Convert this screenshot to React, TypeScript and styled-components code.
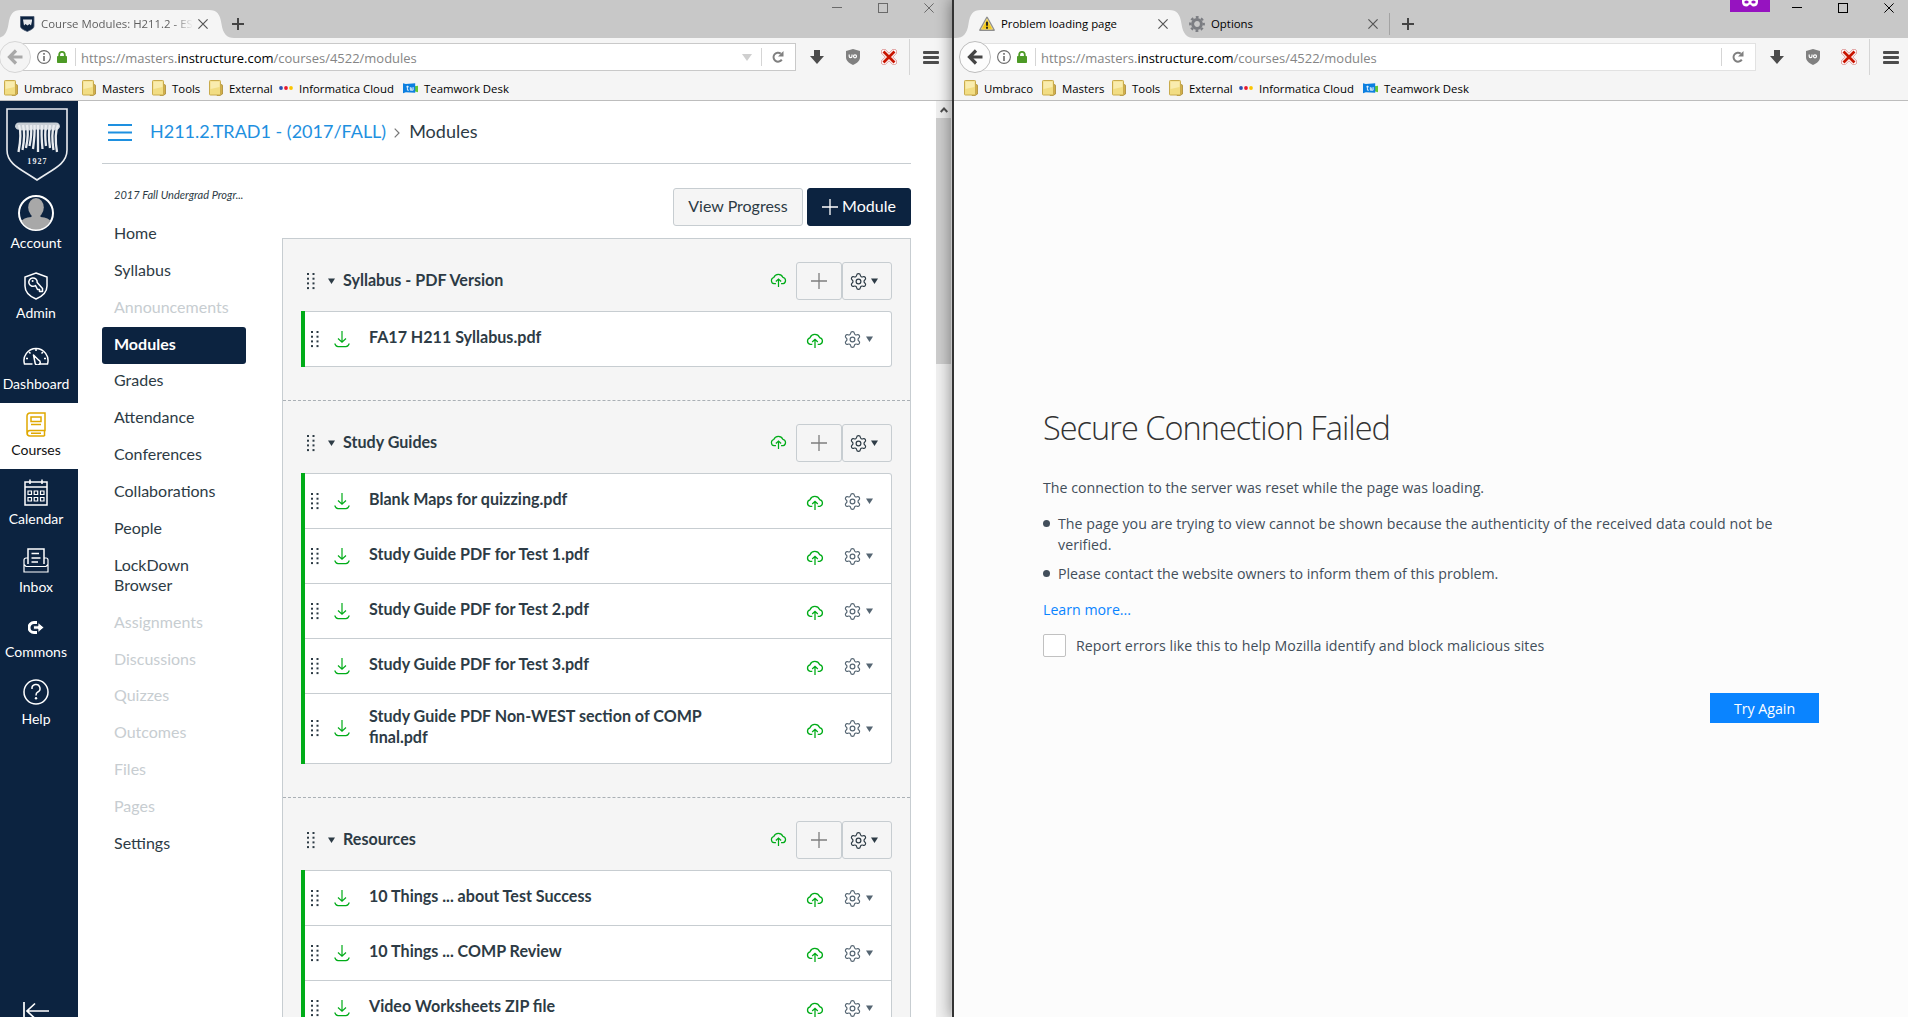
import React from 'react';
import styled, { createGlobalStyle } from 'styled-components';
import { Settings } from 'lucide-react';

const UI = '"Open Sans", "Noto Sans", sans-serif';
const LATO = 'Lato, "Open Sans", sans-serif';
const NAVY = '#0c2340';
const GREEN = '#00ac18';
const INK = '#2d3b45';
const LINE = '#c7cdd1';

const Global = createGlobalStyle`
  * { box-sizing: border-box; }
  html, body { margin: 0; height: 1017px; overflow: hidden; background: #fff; }
  button { font: inherit; color: inherit; margin: 0; padding: 0; }
  svg { display: block; flex: none; }
`;

/* ---------- window frame ---------- */

const Desktop = styled.div`
  display: flex;
  width: 1908px;
  height: 1017px;
  overflow: hidden;
`;

const Window = styled.section<{ $width: number; $front?: boolean }>`
  position: relative;
  display: flex;
  flex-direction: column;
  flex: none;
  width: ${p => p.$width}px;
  height: 1017px;
  overflow: ${p => (p.$front ? 'visible' : 'hidden')};
  border-left: ${p => (p.$front ? '2px solid #333' : '0')};
  box-shadow: ${p => (p.$front ? '0 0 14px 1px rgba(0, 0, 0, 0.42)' : 'none')};
  z-index: ${p => (p.$front ? 1 : 0)};
  background: #fff;
`;

const Chrome = styled.header<{ $left: number; $right: number }>`
  font-family: ${UI};
  font-size: 11.4px;
  color: #000;
  background: #f5f5f5;
  border-bottom: 1px solid #bdbdbd;
  overflow: hidden;
  flex: none;
  height: 101px;
  > * {
    padding-left: ${p => p.$left}px;
    padding-right: ${p => p.$right}px;
  }
`;

const TabStrip = styled.div`
  display: flex;
  height: 38px;
  background: #c8c8c8;
`;

const Tab = styled.div`
  display: flex;
  align-items: flex-end;
  height: 38px;
  margin-left: -4px;
`;

const TabBody = styled.div<{ $dim?: boolean; $pull: number }>`
  display: flex;
  align-items: center;
  width: 186px;
  height: 28px;
  background: #f5f5f5;
  color: ${p => (p.$dim ? '#5f5f5f' : '#000')};
  > svg:first-child { margin-left: -${p => p.$pull}px; }
`;

const TabLabel = styled.span<{ $fade?: boolean }>`
  flex: 1;
  min-width: 0;
  margin-left: 6px;
  padding-bottom: 1px;
  white-space: nowrap;
  overflow: hidden;
  ${p => p.$fade && 'mask-image: linear-gradient(to right, #000 132px, transparent 152px);'}
`;

const IdleTab = styled.div`
  display: flex;
  align-items: center;
  align-self: flex-end;
  width: 201px;
  height: 22px;
  margin: 0 0 3px -5px;
  padding-right: 11px;
  border-right: 1px solid #a3a3a3;
`;

const NewTab = styled.div<{ $gap: number }>`
  display: flex;
  align-items: center;
  height: 28px;
  margin-top: 10px;
  margin-left: ${p => p.$gap}px;
`;

const Controls = styled.div`
  display: flex;
  margin-left: auto;
  margin-right: -4px;
`;

const Control = styled.div`
  display: flex;
  justify-content: center;
  width: 46px;
  padding-top: 3px;
`;

const PrivateBadge = styled.div`
  display: flex;
  justify-content: center;
  width: 40px;
  height: 12px;
  margin-right: 4px;
  background: #9613c0;
`;

const NavRow = styled.div`
  display: flex;
  align-items: center;
  height: 38px;
`;

const Back = styled.div<{ $active?: boolean }>`
  position: relative;
  display: flex;
  align-items: center;
  justify-content: center;
  flex: none;
  width: 32px;
  height: 32px;
  margin-left: -1px;
  border-radius: 50%;
  border: 1px solid ${p => (p.$active ? '#bdbdbd' : '#d6d6d6')};
  background: ${p => (p.$active ? '#fcfcfc' : '#f4f4f4')};
`;

const UrlBar = styled.div<{ $strong?: boolean }>`
  display: flex;
  align-items: center;
  flex: 1;
  height: 28px;
  margin-left: -16px;
  padding-left: 21px;
  background: #fff;
  border: 1px solid ${p => (p.$strong ? '#c9c9c9' : '#e2e2e2')};
`;

const Url = styled.span`
  flex: 1;
  padding: 1px 0 0 5px;
  font-size: 12.98px;
  line-height: 18px;
  color: #858585;
  white-space: nowrap;
  b { font-weight: 400; color: #000; }
`;

const Rule = styled.i<{ $h: number; $gap?: number }>`
  width: 1px;
  height: ${p => p.$h}px;
  margin-left: ${p => p.$gap ?? 0}px;
  background: #d5d5d5;
`;

const Tool = styled.div<{ $w?: number }>`
  display: flex;
  align-items: center;
  justify-content: center;
  width: ${p => p.$w ?? 36}px;
`;

const Bookmarks = styled.div`
  display: flex;
  align-items: center;
  height: 24px;
`;

const Bookmark = styled.div<{ $w: number }>`
  display: flex;
  align-items: center;
  width: ${p => p.$w}px;
  padding-left: 4px;
  gap: 6px;
  white-space: nowrap;
`;

/* ---------- browser icons ---------- */

const Shoulder = ({ flip }: { flip?: boolean }) => (
  <svg width="26" height="28" viewBox="0 0 26 28">
    <path d={flip ? 'M26 28C19 28 15 24 13.500 14S9 0 1 0H0V28Z' : 'M0 28C7 28 11 24 12.500 14S17 0 25 0H26V28Z'} fill="#f5f5f5" />
  </svg>
);

const Cross = ({ size, color, w = 1.2 }: { size: number; color: string; w?: number }) => (
  <svg width={size} height={size} viewBox="0 0 10 10">
    <path d="M.4.4 9.6 9.6M9.6.4.4 9.6" stroke={color} strokeWidth={w} fill="none" />
  </svg>
);

const Plus = () => (
  <svg width="12" height="12" viewBox="0 0 12 12">
    <path d="M6 0V12M0 6H12" stroke="#444" strokeWidth="2" />
  </svg>
);

const Crest = () => (
  <svg width="15" height="16" viewBox="0 0 15 16">
    <path d="M.5.5H14V10C14 13 10 14 7.3 15.6 4.500 14 .5 13 .5 10Z" fill={NAVY} stroke="#4d5c73" strokeWidth=".8" />
    <path d="M3 3.500H12V5L11 9.500 9.500 8 7.500 9.500 5.500 8 4 9.500Z" fill="#e5e8ec" />
  </svg>
);

const Warning = () => (
  <svg width="16" height="16" viewBox="0 0 17 16">
    <path d="M8.500 1 16 14.500H1Z" fill="#e8b90f" stroke="#8f8f8f" strokeWidth="1.8" strokeLinejoin="round" />
    <path d="M8.500 2.500 14.500 13.500H2.500Z" fill="#f3c81c" stroke="#fff3b0" strokeWidth=".6" />
    <path d="M8.500 5.500V9.800M8.500 11V13" stroke="#1f1f1f" strokeWidth="2" />
  </svg>
);

const Cog = () => (
  <svg width="16" height="16" viewBox="0 0 16 16">
    <g fill="none" stroke="#7b7d82">
      <circle cx="8" cy="8" r="4.400" strokeWidth="3" />
      <circle cx="8" cy="8" r="6.800" strokeWidth="2.200" strokeDasharray="2.800 2.540" strokeDashoffset="1.400" />
    </g>
  </svg>
);

const Arrow = ({ color }: { color: string }) => (
  <svg width="16" height="16" viewBox="0 0 16 16">
    <path d="M9 1.500 2.500 8 9 14.500M3 8H15.500" fill="none" stroke={color} strokeWidth="3.200" />
  </svg>
);

const InfoDot = () => (
  <svg width="14" height="14" viewBox="0 0 14 14">
    <circle cx="7" cy="7" r="6.400" fill="none" stroke="#6b6b6b" strokeWidth="1.100" />
    <path d="M7 3V4.800M7 6V11" stroke="#6b6b6b" strokeWidth="1.600" />
  </svg>
);

const Lock = () => (
  <svg width="10" height="12" viewBox="0 0 10 12">
    <path d="M2.200 6V3.800A2.800 2.900 0 0 1 7.800 3.800V6" fill="none" stroke="#4d9a26" strokeWidth="1.800" />
    <rect y="5" width="10" height="7" rx=".8" fill="#4d9a26" />
  </svg>
);

const Reload = () => (
  <svg width="12" height="12" viewBox="0 0 12 12">
    <path d="M9.800 8.600A4.500 4.500 0 1 1 8.800 2.600" fill="none" stroke="#808080" strokeWidth="2" />
    <path d="M11.500 0V5.500H6Z" fill="#808080" />
  </svg>
);

const Download = () => (
  <svg width="14" height="14" viewBox="0 0 14 14">
    <path d="M4 0H10V6H14L7 14 0 6H4Z" fill="#4c4c4c" />
  </svg>
);

const Shield = () => (
  <svg width="14" height="16" viewBox="0 0 14 16">
    <path d="M7 0 14 2V8C14 12 11 14 7 16 3 14 0 12 0 8V2Z" fill="#808080" />
    <path d="M3.200 5.500V7.300A1.400 1.400 0 0 0 6 7.300V5.500" fill="none" stroke="#fff" strokeWidth="1.200" />
    <circle cx="9" cy="7.300" r="1.500" fill="none" stroke="#fff" strokeWidth="1.200" />
  </svg>
);

const RedCross = () => (
  <svg width="16" height="16" viewBox="0 0 16 16">
    <path d="M3 3 13 13M13 3 3 13" stroke="#d77f7f" strokeWidth="6" strokeLinecap="round" />
    <path d="M3 3 13 13M13 3 3 13" stroke="#fff" strokeWidth="4.600" strokeLinecap="round" />
    <path d="M2.500 2.500 13.500 13.500M13.500 2.500 2.500 13.500" stroke="#c81400" strokeWidth="2.800" />
  </svg>
);

const Burger = () => (
  <svg width="16" height="13" viewBox="0 0 16 13">
    <path d="M1 1.500H15M1 6.500H15M1 11.500H15" stroke="#4c4c4c" strokeWidth="2.800" strokeLinecap="round" />
  </svg>
);

const Folder = () => (
  <svg width="14" height="16" viewBox="0 0 14 16">
    <path d="M10 4.500H12.500Q13.500 4.500 13.500 6V14L11 15.500H8Z" fill="#d3b04a" stroke="#a98a35" strokeWidth=".8" />
    <rect x=".5" y=".5" width="11" height="14.500" rx=".8" fill="#f2dd83" stroke="#c9ab4d" />
    <path d="M1.500 1.500H10.500V7L1.500 9Z" fill="#f9ecae" />
  </svg>
);

const Dots = () => (
  <svg width="14" height="6" viewBox="0 0 14 6">
    <circle cx="2" cy="3" r="1.900" fill="#2a4fb0" />
    <circle cx="7" cy="3" r="1.900" fill="#e8192c" />
    <circle cx="12" cy="3" r="1.900" fill="#fbc500" />
  </svg>
);

const Teamwork = () => (
  <svg width="15" height="13" viewBox="0 0 16 13">
    <path d="M12 4 16 3.500V10.500L12 9.500Z" fill="#67c934" />
    <path d="M0 1 3 1.800 13 1V11L3 10.500 0 11.500Z" fill="#0b7fe0" />
    <path d="M3.500 4.700H6.300M4.700 3.500V8.300H6.300M7.800 5V8.300H10.800V5M9.300 5.500V8" fill="none" stroke="#fff" strokeWidth=".9" />
  </svg>
);

const Mask = () => (
  <svg width="16" height="7" viewBox="0 0 16 7">
    <path d="M0 0H16V2C16 5 14 6.500 11.500 6.500 9.800 6.500 9 4.500 8 4.500S6.200 6.500 4.500 6.500C2 6.500 0 5 0 2Z" fill="#fff" />
    <ellipse cx="4.500" cy="2" rx="2.200" ry="1.500" fill="#9613c0" />
    <ellipse cx="11.500" cy="2" rx="2.200" ry="1.500" fill="#9613c0" />
  </svg>
);

/* ---------- browser chrome ---------- */

const WindowControls = ({ color, badge }: { color: string; badge?: boolean }) => (
  <Controls>
    {badge && <PrivateBadge><Mask /></PrivateBadge>}
    <Control>
      <svg width="10" height="10" viewBox="0 0 10 10"><path d="M0 4.500H10" stroke={color} /></svg>
    </Control>
    <Control>
      <svg width="10" height="10" viewBox="0 0 10 10"><rect x=".5" y=".5" width="9" height="9" fill="none" stroke={color} /></svg>
    </Control>
    <Control><Cross size={10} color={color} w={1} /></Control>
  </Controls>
);

const Navigation = ({ front }: { front?: boolean }) => (
  <NavRow>
    <Back $active={front}><Arrow color={front ? '#454545' : '#a9a9a9'} /></Back>
    <UrlBar $strong={!front}>
      <InfoDot />
      <Tool $w={22}><Lock /></Tool>
      <Rule $h={18} $gap={2} />
      <Url>https://masters.<b>instructure.com</b>/courses/4522/modules</Url>
      {!front && (
        <Tool $w={28}>
          <svg width="10" height="7" viewBox="0 0 10 7"><path d="M0 0H10L5 7Z" fill="#cfcfcf" /></svg>
        </Tool>
      )}
      <Rule $h={18} />
      <Tool $w={31}><Reload /></Tool>
      <Tool $w={2} />
    </UrlBar>
    <Tool $w={3} />
    <Tool><Download /></Tool>
    <Tool><Shield /></Tool>
    <Tool><RedCross /></Tool>
    <Tool $w={5}><Rule $h={36} /></Tool>
    <Tool $w={2} />
    <Tool $w={34}><Burger /></Tool>
  </NavRow>
);

const BookmarkBar = () => (
  <Bookmarks>
    <Bookmark $w={78}><Folder />Umbraco</Bookmark>
    <Bookmark $w={70}><Folder />Masters</Bookmark>
    <Bookmark $w={57}><Folder />Tools</Bookmark>
    <Bookmark $w={70}><Folder />External</Bookmark>
    <Bookmark $w={124}><Dots />Informatica Cloud</Bookmark>
    <Bookmark $w={120}><Teamwork />Teamwork Desk</Bookmark>
  </Bookmarks>
);

/* ---------- Canvas global navigation ---------- */

const Page = styled.div`
  display: flex;
  flex: 1;
  min-height: 0;
  font-family: ${LATO};
  color: ${INK};
`;

const Rail = styled.nav`
  display: flex;
  flex-direction: column;
  flex: none;
  width: 78px;
  overflow: hidden;
  background: ${NAVY};
`;

const RailLogo = styled.div`
  display: flex;
  justify-content: center;
  flex: none;
  height: 84px;
  padding: 7px 5px 0 0;
`;

const RailItem = styled.a<{ $h: number; $gap: number; $active?: boolean }>`
  display: flex;
  flex-direction: column;
  align-items: center;
  justify-content: flex-end;
  flex: none;
  height: ${p => p.$h}px;
  padding: 0 6px 10px 0;
  gap: ${p => p.$gap}px;
  font-size: 14px;
  line-height: 18px;
  color: ${p => (p.$active ? '#111' : '#fff')};
  background: ${p => (p.$active ? '#fff' : 'transparent')};
`;

const RailFoot = styled.div`
  display: flex;
  justify-content: center;
  flex: none;
  margin-top: 264px;
  padding-right: 6px;
`;

const Logo = () => (
  <svg width="62" height="73" viewBox="0 0 62 73">
    <path d="M1 1H61V42C61 57 45 62 31 72 17 62 1 57 1 42Z" fill="none" stroke="#e9ecf0" strokeWidth="1.600" />
    <path d="M13 17Q16 26 12.500 44M17 17Q19.500 26 16.500 42M21 17Q23 26 20 40M25 17Q26 26 23.500 38M28.500 17Q29 26 27 41M32 17V44M36 17Q35 26 36.500 41M40 17Q38.500 26 40 38M44 17Q42 26 44 40M48 17Q45 26 47.500 42M52 17Q48 26 51 44" stroke="#e9ecf0" strokeWidth="2.300" fill="none" />
    <path d="M9 19Q9 14 14 14.500H49Q54 14 54 19Q52 23 50 21 48 24 46 21 44 24 42 21 40 24 38 21 36 24 34 21 32 24 30 21 28 24 26 21 24 24 22 21 20 24 18 21 16 24 14 21 11 23 9 19Z" fill="#e9ecf0" opacity=".85" />
    <text x="31.500" y="56" textAnchor="middle" fontFamily="Liberation Serif, serif" fontWeight="700" fontSize="8" letterSpacing="1.100" fill="#e9ecf0">1927</text>
  </svg>
);

const Avatar = () => (
  <svg width="36" height="36" viewBox="0 0 36 36">
    <clipPath id="face"><circle cx="18" cy="18" r="16.500" /></clipPath>
    <circle cx="18" cy="18" r="17" fill={NAVY} stroke="#fff" strokeWidth="2" />
    <g clipPath="url(#face)" fill="#a8a8a8">
      <ellipse cx="18" cy="12.500" rx="7.800" ry="9.500" />
      <path d="M13.500 18H22.500V22Q31 22.500 33 27V36H3V27Q5 22.500 13.500 22Z" />
    </g>
  </svg>
);

const line = { fill: 'none', stroke: '#fff', strokeWidth: 1.5 } as const;

const AdminIcon = () => (
  <svg width="24" height="28" viewBox="0 0 24 28">
    <path d="M12 1 23 5V14C23 21 18 24.500 12 27 6 24.500 1 21 1 14V5Z" {...line} />
    <path d="M11.500 13.500A4.200 4.200 0 1 1 13.200 10.500L18.500 16.500V19.500H15.500V17.500H13.500Z" {...line} strokeLinejoin="round" />
    <circle cx="8.600" cy="9" r="1" fill="#fff" />
  </svg>
);

const DashboardIcon = () => (
  <svg width="26" height="19" viewBox="0 0 26 19">
    <path d="M9.500 18H1.500A12 12 0 1 1 24.500 18H17" {...line} />
    <path d="M10.500 9 15.500 14A2.600 2.600 0 1 1 12 16.500Z" {...line} strokeLinejoin="round" />
    <path d="M13 3V5M6 6 7.500 7.500M20 6 18.500 7.500M3 12.500H5M21 12.500H23" {...line} />
  </svg>
);

const CoursesIcon = () => (
  <svg width="20" height="25" viewBox="0 0 20 25">
    <g fill="none" stroke="#dfa800" strokeWidth="1.500">
      <path d="M18.500 24H4A3 3 0 0 1 1 21V4A3 3 0 0 1 4 1H19V18.500H4A2.700 2.700 0 0 0 4 24M18.500 18.500V24M5 21.300H15" />
      <rect x="5" y="5" width="10" height="4.500" />
      <path d="M5 12.500H15" />
    </g>
  </svg>
);

const CalendarIcon = () => (
  <svg width="24" height="27" viewBox="0 0 24 27">
    <path d="M1 3H23V26H1ZM1 8H23M6 .5V5M18 .5V5" {...line} />
    <path d="M4 12H7.500V15.500H4ZM10.200 12H13.700V15.500H10.200ZM16.500 12H20V15.500H16.500ZM4 18.500H7.500V22H4ZM10.200 18.500H13.700V22H10.200ZM16.500 18.500H20V22H16.500Z" {...line} strokeWidth={1.2} />
  </svg>
);

const InboxIcon = () => (
  <svg width="26" height="25" viewBox="0 0 26 25">
    <path d="M5 16V1H21V16M8.500 5.500H16M8.500 10H17.500M8.500 14H15" {...line} />
    <path d="M5 10H3A2 2 0 0 0 1 12V24H25V12A2 2 0 0 0 23 10H21M1 16.500 3 18.500H23L25 16.500" {...line} strokeWidth={1.200} />
  </svg>
);

const CommonsIcon = () => (
  <svg width="16" height="13" viewBox="0 0 16 13">
    <path d="M9 1.500H6A5 5 0 0 0 6 11.500H9" fill="none" stroke="#fff" strokeWidth="3" />
    <path d="M5.500 4.800H10V1.500L16 6.500 10 11.500V8.200H5.500Z" fill="#fff" stroke={NAVY} strokeWidth=".8" />
  </svg>
);

const HelpIcon = () => (
  <svg width="26" height="26" viewBox="0 0 26 26">
    <circle cx="13" cy="13" r="12" {...line} />
    <path d="M9 10A4 4 0 1 1 14.500 13.200Q13 14 13 16.500" {...line} />
    <circle cx="13" cy="19.300" r="1.200" fill="#fff" />
  </svg>
);

const CollapseIcon = () => (
  <svg width="26" height="18" viewBox="0 0 26 18">
    <path d="M1 0V18M26 9H4M12 1.500 4 9 12 16.500" {...line} strokeWidth={1.700} />
  </svg>
);

const GlobalNav = () => (
  <Rail>
    <RailLogo><Logo /></RailLogo>
    <RailItem $h={77} $gap={3}><Avatar />Account</RailItem>
    <RailItem $h={70} $gap={4}><AdminIcon />Admin</RailItem>
    <RailItem $h={71} $gap={10}><DashboardIcon />Dashboard</RailItem>
    <RailItem $h={66} $gap={4} $active><CoursesIcon />Courses</RailItem>
    <RailItem $h={69} $gap={4}><CalendarIcon />Calendar</RailItem>
    <RailItem $h={68} $gap={5}><InboxIcon />Inbox</RailItem>
    <RailItem $h={65} $gap={9}><CommonsIcon />Commons</RailItem>
    <RailItem $h={67} $gap={5}><HelpIcon />Help</RailItem>
    <RailFoot><CollapseIcon /></RailFoot>
  </Rail>
);

/* ---------- course page ---------- */

const Main = styled.main`
  display: flex;
  flex-direction: column;
  flex: 1;
  min-width: 0;
  padding: 0 25px 0 24px;
`;

const Crumbs = styled.div`
  display: flex;
  align-items: center;
  flex: none;
  height: 63px;
  padding: 0 0 3px 6px;
  border-bottom: 1px solid ${LINE};
  font-size: 18px;
  white-space: nowrap;
  svg:first-child { margin: 4px 18px 0 0; }
  svg + span + svg { margin: 5px 9px 0 8px; }
`;

const CrumbLink = styled.span`
  color: #1e90e0;
`;

const Columns = styled.div`
  display: flex;
  flex: 1;
  min-height: 0;
`;

const CourseNav = styled.nav`
  flex: none;
  width: 144px;
  margin-right: 36px;
`;

const Term = styled.div`
  height: 52.5px;
  padding: 23px 0 0 12px;
  font-size: 11.05px;
  line-height: 15px;
  font-style: italic;
  white-space: nowrap;
`;

const CourseLink = styled.a<{ $active?: boolean; $muted?: boolean }>`
  display: block;
  padding: 6.7px 36px 9.72px 12px;
  font-size: 16px;
  line-height: 20.4px;
  border-radius: 3px;
  color: ${p => (p.$active ? '#fff' : p.$muted ? '#c7cdd1' : INK)};
  font-weight: ${p => (p.$active ? 700 : 400)};
  background: ${p => (p.$active ? NAVY : 'transparent')};
`;

const Content = styled.div`
  flex: 1;
  min-width: 0;
`;

const Actions = styled.div`
  display: flex;
  justify-content: flex-end;
  gap: 4px;
  padding: 24px 0 12px;
`;

const Button = styled.button<{ $primary?: boolean; $w: number; $shift?: number }>`
  display: flex;
  align-items: center;
  justify-content: center;
  width: ${p => p.$w}px;
  height: 38px;
  gap: 4px;
  padding-right: ${p => p.$shift ?? 0}px;
  font-size: 16px;
  border: 1px solid ${p => (p.$primary ? NAVY : LINE)};
  border-radius: 3px;
  background: ${p => (p.$primary ? NAVY : '#f5f5f5')};
  color: ${p => (p.$primary ? '#fff' : INK)};
`;

const ButtonLabel = styled.span`
  padding-bottom: 3px;
`;

const ModuleList = styled.div`
  border: 1px solid ${LINE};
  border-bottom: 0;
  background: #f5f5f5;
`;

const ModuleBox = styled.section`
  padding: 23px 18px 33px;
  border-bottom: 1px dashed #aab0b5;
`;

const ModuleHead = styled.div`
  display: flex;
  align-items: center;
  height: 38px;
  margin-bottom: 11px;
  padding-left: 6px;
  font-size: 16.1px;
  font-weight: 700;
  > svg:nth-child(2) { margin: 0 8.5px 0 12.5px; }
  > svg:nth-child(4) { margin: 0 9.5px 2px auto; }
`;

const ModuleTitle = styled.span`
  padding-bottom: 3px;
`;

const Items = styled.div`
  padding: 1px 1px 1px 0;
  border-radius: 0 3px 3px 0;
  background: #fff;
  box-shadow: inset 4px 0 ${GREEN}, inset 0 0 0 1px ${LINE};
`;

const Item = styled.div<{ $tall?: boolean }>`
  display: flex;
  align-items: center;
  height: ${p => (p.$tall ? 70 : 55)}px;
  padding: 1px 18.5px 0 10px;
  box-shadow: inset 4px 0 ${GREEN}, inset 0 1px ${LINE};
  &:first-child {
    height: 54px;
    padding-top: 0;
    box-shadow: inset 4px 0 ${GREEN};
  }
  > svg:nth-child(2) { margin: 0 19px 0 15px; }
  > svg:nth-child(4) { margin: 4px 19px 0 auto; }
`;

const ItemTitle = styled.span`
  width: 350px;
  padding-bottom: 6px;
  font-size: 16.08px;
  line-height: 21px;
  font-weight: 700;
`;

const GearMenu = styled.span<{ $soft?: boolean }>`
  display: flex;
  align-items: center;
  gap: 3.5px;
  color: ${p => (p.$soft ? '#556572' : INK)};
`;

const Grip = () => (
  <svg width="8" height="17" viewBox="0 0 8 17" fill={INK}>
    {[0, 4.7, 9.4, 14.1].map(y => (
      <React.Fragment key={y}>
        <rect x="0" y={y} width="2" height="2" />
        <rect x="5.500" y={y} width="2" height="2" />
      </React.Fragment>
    ))}
  </svg>
);

const Caret = () => (
  <svg width="7" height="6" viewBox="0 0 7 6"><path d="M0 .5H7L3.500 6Z" fill="currentColor" /></svg>
);

const FileIcon = () => (
  <svg width="16" height="17" viewBox="0 0 16 17">
    <path d="M8 0V11M4 7.500 8 11.200 12 7.500M.7 12.500Q2 15.700 4 15.700H12Q14 15.700 15.300 12.500" fill="none" stroke={GREEN} strokeWidth="1.200" />
  </svg>
);

const Cloud = ({ size }: { size: number }) => (
  <svg width={size} height={size * 0.84} viewBox="0 0 18 15">
    <path d="M6.300 11.300H4.200A3.400 3.400 0 0 1 4 4.700 5.200 5.200 0 0 1 13.600 4.500 3.500 3.500 0 0 1 13.900 11.300H11.700M9 15V6.500M6.200 9 9 6.300 11.800 9" fill="none" stroke={GREEN} strokeWidth="1.300" />
  </svg>
);

const ThinPlus = ({ color }: { color: string }) => (
  <svg width="16" height="16" viewBox="0 0 16 16">
    <path d="M8 0V16M0 8H16" stroke={color} strokeWidth="1.300" />
  </svg>
);

const Module = ({ title, items }: { title: string; items: string[] }) => (
  <ModuleBox>
    <ModuleHead>
      <Grip /><Caret />
      <ModuleTitle>{title}</ModuleTitle>
      <Cloud size={17} />
      <Button $w={46}><ThinPlus color="#7d7d7d" /></Button>
      <Button $w={50} $shift={7}><GearMenu><Settings size={19} strokeWidth={1.500} /><Caret /></GearMenu></Button>
    </ModuleHead>
    <Items>
      {items.map(name => (
        <Item key={name} $tall={name.length > 35}>
          <Grip /><FileIcon />
          <ItemTitle>{name}</ItemTitle>
          <Cloud size={18} />
          <GearMenu $soft><Settings size={19} strokeWidth={1.500} /><Caret /></GearMenu>
        </Item>
      ))}
    </Items>
  </ModuleBox>
);

const ScrollBar = styled.div`
  display: flex;
  flex-direction: column;
  align-items: center;
  flex: none;
  width: 15px;
  margin-right: 1px;
  background: #f0f0f0;
`;

const ScrollUp = styled.div`
  display: flex;
  align-items: center;
  height: 17px;
`;

const Thumb = styled.div`
  width: 15px;
  height: 246px;
  background: #cdcdcd;
`;

const links: { name: string; muted?: boolean; active?: boolean }[] = [
  { name: 'Home' },
  { name: 'Syllabus' },
  { name: 'Announcements', muted: true },
  { name: 'Modules', active: true },
  { name: 'Grades' },
  { name: 'Attendance' },
  { name: 'Conferences' },
  { name: 'Collaborations' },
  { name: 'People' },
  { name: 'LockDown Browser' },
  { name: 'Assignments', muted: true },
  { name: 'Discussions', muted: true },
  { name: 'Quizzes', muted: true },
  { name: 'Outcomes', muted: true },
  { name: 'Files', muted: true },
  { name: 'Pages', muted: true },
  { name: 'Settings' },
];

const modules = [
  { title: 'Syllabus - PDF Version', items: ['FA17 H211 Syllabus.pdf'] },
  {
    title: 'Study Guides',
    items: [
      'Blank Maps for quizzing.pdf',
      'Study Guide PDF for Test 1.pdf',
      'Study Guide PDF for Test 2.pdf',
      'Study Guide PDF for Test 3.pdf',
      'Study Guide PDF Non-WEST section of COMP final.pdf',
    ],
  },
  { title: 'Resources', items: ['10 Things ... about Test Success', '10 Things ... COMP Review', 'Video Worksheets ZIP file'] },
];

/* ---------- error page ---------- */

const ErrorPage = styled.div`
  flex: 1;
  padding: 303px 0 0 89px;
  font-family: ${UI};
  font-size: 14.2px;
  line-height: 21px;
  color: #424e5a;
  background: #fcfcfc;
`;

const ErrorBody = styled.div`
  width: 776px;
`;

const ErrorTitle = styled.h1`
  margin: 0 0 25px;
  font-size: 32.5px;
  font-weight: 300;
  line-height: 48px;
  letter-spacing: -0.98px;
  color: #333;
`;

const ErrorText = styled.p`
  margin: 0;
`;

const Reasons = styled.ul`
  width: 740px;
  margin: 15px 0 0;
  padding: 0;
  list-style: none;
`;

const Reason = styled.li<{ $loose?: boolean }>`
  display: flex;
  margin-bottom: 8px;
  letter-spacing: ${p => (p.$loose ? '0.04px' : 'normal')};
  &::before {
    content: '';
    flex: none;
    width: 7px;
    height: 7px;
    margin: 7px 8px 0 0;
    border-radius: 50%;
    background: #424e5a;
  }
`;

const Learn = styled.a`
  display: block;
  margin-top: 15px;
  color: #0a84ff;
`;

const Report = styled.label`
  display: flex;
  align-items: center;
  gap: 10px;
  margin-top: 14px;
  letter-spacing: 0.055px;
`;

const Box = styled.span`
  width: 23px;
  height: 23px;
  border: 1px solid #c1c1c1;
  border-radius: 2px;
  background: #fff;
`;

const Retry = styled.button`
  display: block;
  width: 109px;
  height: 30px;
  margin: 36px 0 0 auto;
  border: 0;
  background: #0a84ff;
  color: #fff;
`;

export default function App() {
  return (
    <Desktop>
      <Global />
      <Window $width={952}>
        <Chrome $left={0} $right={4}>
          <TabStrip>
            <Tab>
              <Shoulder />
              <TabBody $dim $pull={2}>
                <Crest />
                <TabLabel $fade>Course Modules: H211.2 - ES</TabLabel>
                <Cross size={10} color="#555" />
              </TabBody>
              <Shoulder flip />
            </Tab>
            <NewTab $gap={-2}><Plus /></NewTab>
            <WindowControls color="#6a6a6a" />
          </TabStrip>
          <Navigation />
          <BookmarkBar />
        </Chrome>
        <Page>
          <GlobalNav />
          <Main>
            <Crumbs>
              <svg width="24" height="17" viewBox="0 0 24 17"><path d="M0 1H24M0 8.500H24M0 16H24" stroke="#1e90e0" strokeWidth="1.800" /></svg>
              <CrumbLink>H211.2.TRAD1 - (2017/FALL)</CrumbLink>
              <svg width="6" height="10" viewBox="0 0 6 10"><path d="M.7.7 5 5 .7 9.300" fill="none" stroke="#777" strokeWidth="1.200" /></svg>
              <span>Modules</span>
            </Crumbs>
            <Columns>
              <CourseNav>
                <Term>2017 Fall Undergrad Progr...</Term>
                {links.map(l => (
                  <CourseLink key={l.name} $active={l.active} $muted={l.muted}>{l.name}</CourseLink>
                ))}
              </CourseNav>
              <Content>
                <Actions>
                  <Button $w={130}><ButtonLabel>View Progress</ButtonLabel></Button>
                  <Button $w={104} $primary><ThinPlus color="#fff" /><ButtonLabel>Module</ButtonLabel></Button>
                </Actions>
                <ModuleList>
                  {modules.map(m => <Module key={m.title} {...m} />)}
                </ModuleList>
              </Content>
            </Columns>
          </Main>
          <ScrollBar>
            <ScrollUp>
              <svg width="8" height="6" viewBox="0 0 8 6"><path d="M.7 5 4 1.500 7.300 5" fill="none" stroke="#505050" strokeWidth="1.900" /></svg>
            </ScrollUp>
            <Thumb />
          </ScrollBar>
        </Page>
      </Window>
      <Window $width={956} $front>
        <Chrome $left={6} $right={0}>
          <TabStrip>
            <Tab>
              <Shoulder />
              <TabBody $pull={3}>
                <Warning />
                <TabLabel>Problem loading page</TabLabel>
                <Cross size={10} color="#555" />
              </TabBody>
              <Shoulder flip />
            </Tab>
            <IdleTab>
              <Cog />
              <TabLabel>Options</TabLabel>
              <Cross size={10} color="#555" />
            </IdleTab>
            <NewTab $gap={12}><Plus /></NewTab>
            <WindowControls color="#000" badge />
          </TabStrip>
          <Navigation front />
          <BookmarkBar />
        </Chrome>
        <ErrorPage>
          <ErrorBody>
            <ErrorTitle>Secure Connection Failed</ErrorTitle>
            <ErrorText>The connection to the server was reset while the page was loading.</ErrorText>
            <Reasons>
              <Reason $loose>The page you are trying to view cannot be shown because the authenticity of the received data could not be verified.</Reason>
              <Reason>Please contact the website owners to inform them of this problem.</Reason>
            </Reasons>
            <Learn>Learn more...</Learn>
            <Report><Box />Report errors like this to help Mozilla identify and block malicious sites</Report>
            <Retry>Try Again</Retry>
          </ErrorBody>
        </ErrorPage>
      </Window>
    </Desktop>
  );
}
